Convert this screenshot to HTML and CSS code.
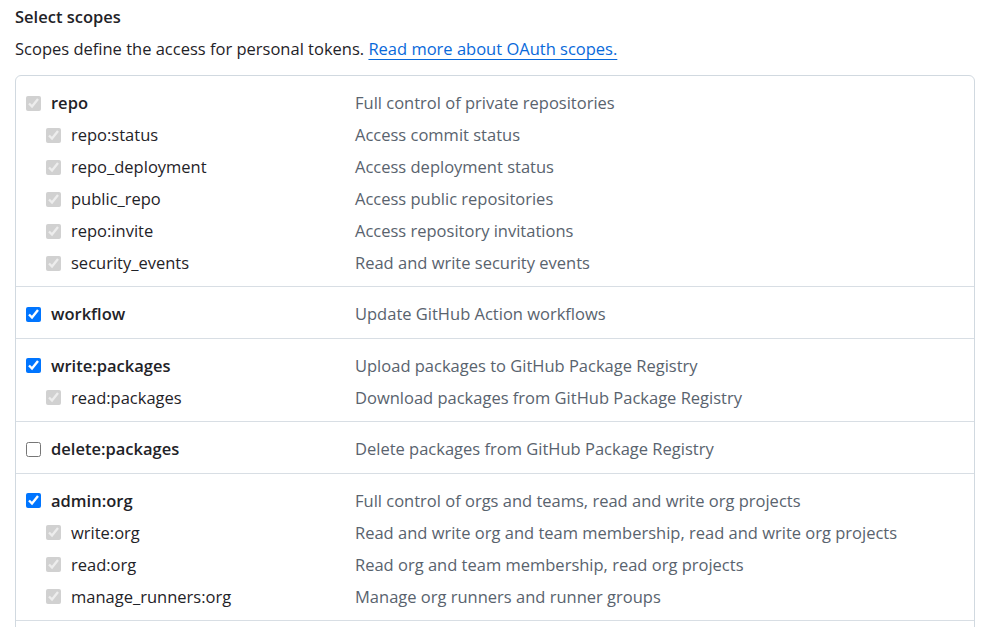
FILE: index.html
```html
<!DOCTYPE html>
<html lang="en">
<head>
<meta charset="utf-8">
<title>Select scopes</title>
<link rel="stylesheet" href="styles.css">
</head>
<body>
<main class="page">
  <h2 class="title">Select scopes</h2>
  <p class="lead">Scopes define the access for personal tokens. <a class="link" href="#">Read more about OAuth scopes.</a></p>
  <div class="scopes">
    <div class="group">
      <div class="row"><label class="name top"><input type="checkbox" checked disabled>repo</label><span class="desc">Full control of private repositories</span></div>
      <div class="row"><label class="name sub"><input type="checkbox" checked disabled>repo:status</label><span class="desc">Access commit status</span></div>
      <div class="row"><label class="name sub"><input type="checkbox" checked disabled>repo_deployment</label><span class="desc">Access deployment status</span></div>
      <div class="row"><label class="name sub"><input type="checkbox" checked disabled>public_repo</label><span class="desc">Access public repositories</span></div>
      <div class="row"><label class="name sub"><input type="checkbox" checked disabled>repo:invite</label><span class="desc">Access repository invitations</span></div>
      <div class="row"><label class="name sub"><input type="checkbox" checked disabled>security_events</label><span class="desc">Read and write security events</span></div>
    </div>
    <div class="group">
      <div class="row"><label class="name top"><input type="checkbox" checked>workflow</label><span class="desc">Update GitHub Action workflows</span></div>
    </div>
    <div class="group">
      <div class="row"><label class="name top"><input type="checkbox" checked>write:packages</label><span class="desc">Upload packages to GitHub Package Registry</span></div>
      <div class="row"><label class="name sub"><input type="checkbox" checked disabled>read:packages</label><span class="desc">Download packages from GitHub Package Registry</span></div>
    </div>
    <div class="group">
      <div class="row"><label class="name top"><input type="checkbox">delete:packages</label><span class="desc">Delete packages from GitHub Package Registry</span></div>
    </div>
    <div class="group">
      <div class="row"><label class="name top"><input type="checkbox" checked>admin:org</label><span class="desc">Full control of orgs and teams, read and write org projects</span></div>
      <div class="row"><label class="name sub"><input type="checkbox" checked disabled>write:org</label><span class="desc">Read and write org and team membership, read and write org projects</span></div>
      <div class="row"><label class="name sub"><input type="checkbox" checked disabled>read:org</label><span class="desc">Read org and team membership, read org projects</span></div>
      <div class="row"><label class="name sub"><input type="checkbox" checked disabled>manage_runners:org</label><span class="desc">Manage org runners and runner groups</span></div>
    </div>
    <div class="group group-more"></div>
  </div>
</main>
</body>
</html>
```
FILE: styles.css
```css
html, body {
  margin: 0;
  height: 627px;
  overflow: hidden;
  background: #ffffff;
}
body {
  font-family: "Open Sans", "Noto Sans", sans-serif;
  font-size: 16.5px;
  color: #1f2328;
}
.page {
  padding: 5px 11px 0 15px;
}
.title {
  margin: 0;
  font-size: 16.5px;
  font-weight: 600;
  line-height: 24px;
}
.lead {
  margin: 8px 0 14px;
  line-height: 24px;
}
.link {
  color: #0969da;
  text-decoration: underline;
  text-underline-offset: 4px;
}
.scopes {
  border: 1px solid #d1d9e0;
  border-radius: 6px;
}
.group {
  padding: 11px 0 7.4px 10px;
  border-bottom: 1px solid #d8dee4;
}
.group-more {
  height: 40px;
  border-bottom: 0;
}
.row {
  display: grid;
  grid-template-columns: 329px 1fr;
  line-height: 32px;
  height: 32px;
}
.name {
  display: flex;
  align-items: center;
}
.name.top {
  font-weight: 600;
}
.name.sub {
  padding-left: 20px;
}
.name input {
  width: 15px;
  height: 15px;
  margin: 0 10px 0 0;
}
.desc {
  color: #59636e;
}
```
